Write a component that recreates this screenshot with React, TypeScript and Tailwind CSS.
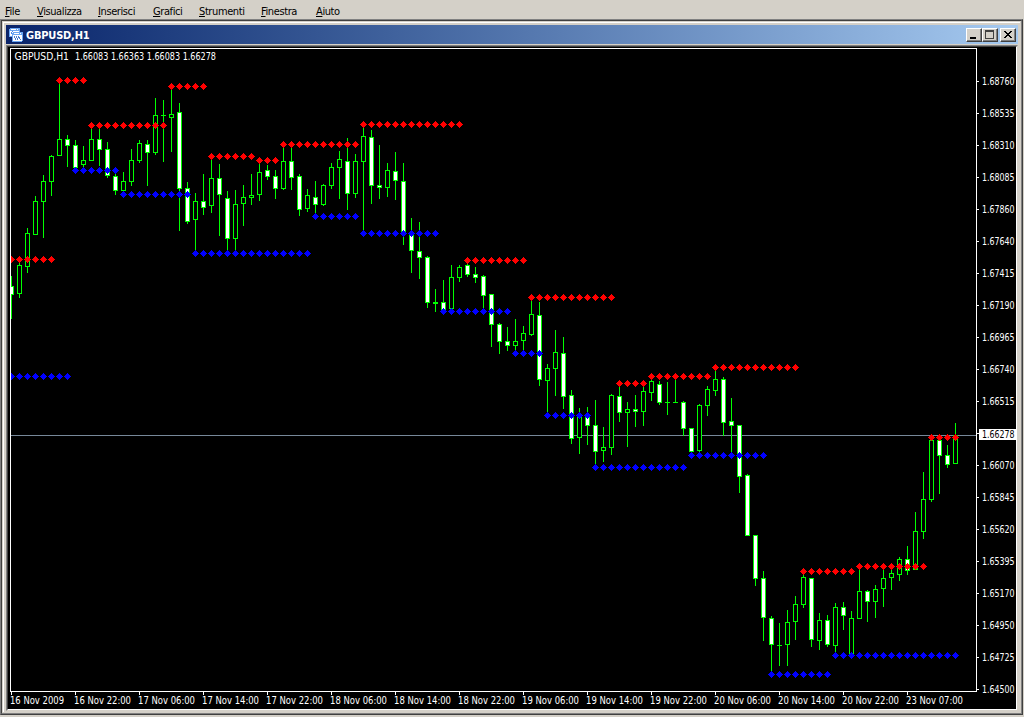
import React from "react";

type Candle = [high: number, low: number, top: number, bottom: number, filled: 0 | 1];

// One entry per hour; y values in chart pixels, bottoms exclusive.
const CANDLES: Candle[] = [
  [276, 319, 286, 295, 1], [261, 298, 265, 294, 0], [228, 273, 233, 267, 0], [196, 235, 201, 235, 0],
  [175, 238, 181, 202, 0], [155, 196, 156, 182, 0], [82, 156, 139, 156, 0], [135, 167, 139, 146, 1],
  [140, 168, 145, 168, 1], [146, 167, 160, 165, 0], [126, 161, 139, 161, 0], [126, 166, 139, 150, 1],
  [142, 178, 149, 176, 1], [174, 195, 176, 191, 1], [172, 194, 181, 191, 0], [149, 186, 160, 182, 0],
  [140, 163, 143, 161, 0], [140, 186, 144, 153, 1], [98, 155, 115, 153, 0], [100, 162, 115, 116, 0],
  [87, 152, 114, 118, 0], [103, 231, 112, 189, 1], [182, 224, 188, 222, 1], [193, 251, 201, 220, 0],
  [174, 215, 201, 208, 1], [158, 213, 178, 206, 0], [164, 236, 178, 195, 1], [191, 251, 198, 239, 1],
  [190, 251, 204, 239, 0], [185, 226, 197, 204, 0], [174, 205, 195, 198, 0], [163, 201, 172, 195, 0],
  [165, 180, 170, 177, 1], [170, 199, 176, 189, 1], [147, 190, 161, 189, 0], [147, 190, 161, 178, 1],
  [174, 216, 176, 210, 1], [189, 212, 195, 209, 0], [181, 214, 197, 205, 1], [184, 206, 185, 205, 0],
  [163, 189, 167, 186, 0], [151, 199, 159, 168, 0], [138, 210, 161, 194, 1], [154, 198, 161, 194, 0],
  [126, 232, 136, 162, 0], [130, 204, 137, 186, 1], [145, 199, 185, 188, 1], [163, 197, 170, 188, 0],
  [152, 200, 171, 181, 1], [163, 245, 181, 232, 1], [218, 273, 233, 251, 1], [222, 279, 251, 258, 1],
  [256, 308, 257, 303, 1], [289, 312, 302, 304, 0], [280, 312, 302, 311, 1], [265, 309, 277, 309, 0],
  [265, 282, 267, 278, 0], [263, 277, 265, 275, 1], [267, 283, 274, 278, 1], [275, 309, 276, 296, 1],
  [294, 347, 294, 325, 1], [323, 354, 324, 342, 1], [327, 351, 341, 346, 1], [319, 351, 341, 346, 0],
  [326, 351, 333, 341, 0], [299, 336, 314, 335, 0], [302, 386, 315, 380, 1], [364, 413, 368, 381, 0],
  [330, 396, 352, 369, 0], [337, 409, 353, 397, 1], [390, 444, 395, 439, 1], [408, 454, 416, 438, 0],
  [407, 445, 415, 426, 1], [400, 464, 425, 452, 1], [427, 462, 447, 451, 0], [394, 455, 395, 448, 0],
  [386, 422, 396, 413, 1], [402, 447, 409, 413, 0], [395, 427, 409, 412, 1], [386, 426, 391, 412, 0],
  [379, 401, 381, 393, 0], [381, 405, 384, 403, 1], [382, 415, 402, 403, 0], [379, 403, 402, 403, 0],
  [401, 436, 402, 429, 1], [428, 452, 428, 452, 1], [404, 452, 405, 451, 0], [386, 416, 389, 406, 0],
  [370, 396, 379, 391, 0], [377, 436, 379, 423, 1], [398, 453, 421, 426, 1], [425, 493, 425, 477, 1],
  [474, 536, 475, 536, 1], [535, 586, 535, 579, 1], [571, 641, 578, 618, 1], [616, 671, 618, 645, 1],
  [623, 666, 645, 646, 0], [610, 666, 622, 645, 0], [596, 640, 604, 622, 0], [574, 608, 577, 605, 0],
  [578, 647, 578, 640, 1], [613, 650, 620, 641, 0], [615, 647, 620, 645, 1], [603, 653, 607, 646, 0],
  [602, 630, 607, 616, 1], [611, 655, 618, 655, 0], [568, 619, 591, 619, 0], [590, 622, 591, 602, 1],
  [585, 618, 589, 602, 0], [568, 607, 578, 589, 0], [568, 590, 573, 578, 0], [557, 581, 559, 575, 0],
  [546, 575, 559, 571, 1], [512, 570, 531, 570, 0], [472, 539, 499, 532, 0], [438, 502, 440, 500, 0],
  [438, 494, 440, 456, 1], [445, 468, 455, 465, 1], [423, 464, 435, 464, 0],
];

type Level = [y: number, from: number, to: number];

const RESISTANCE: Level[] = [
  [259, 11, 51], [80, 59, 83], [125, 91, 163], [86, 171, 203], [156, 211, 251], [160, 259, 275],
  [144, 283, 355], [124, 363, 459], [260, 467, 523], [297, 531, 611], [383, 619, 643],
  [376, 651, 707], [367, 715, 795], [571, 803, 851], [566, 859, 923], [437, 931, 955],
];
const SUPPORT: Level[] = [
  [376, 11, 67], [170, 75, 115], [194, 123, 187], [253, 195, 307], [216, 315, 355], [233, 363, 435],
  [311, 443, 507], [353, 515, 539], [415, 547, 587], [467, 595, 683], [455, 691, 763],
  [674, 771, 827], [655, 835, 955],
];

const PRICES = [
  "1.68760", "1.68535", "1.68310", "1.68085", "1.67860", "1.67640", "1.67415", "1.67190", "1.66965",
  "1.66740", "1.66515", "", "1.66070", "1.65845", "1.65620", "1.65395", "1.65170", "1.64950",
  "1.64725", "1.64500",
];
const TIMES = [
  "16 Nov 2009", "16 Nov 22:00", "17 Nov 06:00", "17 Nov 14:00", "17 Nov 22:00", "18 Nov 06:00",
  "18 Nov 14:00", "18 Nov 22:00", "19 Nov 06:00", "19 Nov 14:00", "19 Nov 22:00", "20 Nov 06:00",
  "20 Nov 14:00", "20 Nov 22:00", "23 Nov 07:00",
];

const MENU: [string, string][] = [
  ["File", "w-[32px]"],
  ["Visualizza", "w-[61px]"],
  ["Inserisci", "w-[55px]"],
  ["Grafici", "w-[46px]"],
  ["Strumenti", "w-[62px]"],
  ["Finestra", "w-[55px]"],
  ["Aiuto", "w-[32px]"],
];

function diamond(x: number, y: number) {
  return (
    `M${x} ${y - 3}h1v7h-1z` +
    `M${x - 1} ${y - 2}h3v5h-3z` +
    `M${x - 2} ${y - 1}h5v3h-5z` +
    `M${x - 3} ${y}h7v1h-7z`
  );
}

function levelPath(levels: Level[]) {
  const parts: string[] = [];
  for (const [y, from, to] of levels) {
    for (let x = from; x <= to; x += 8) parts.push(diamond(x, y));
  }
  return parts.join("");
}

function Chart() {
  return (
    <svg
      width="1008"
      height="662"
      viewBox="8 47 1008 662"
      shapeRendering="crispEdges"
      className="block overflow-visible bg-black font-[family-name:'DejaVu_Sans_Condensed','DejaVu_Sans',sans-serif] text-[10px]"
    >
      <defs>
        <clipPath id="plot">
          <rect x="11" y="49" width="965" height="642" />
        </clipPath>
      </defs>
      <g clipPath="url(#plot)">
        <rect x="11" y="435" width="965" height="1" fill="#778899" />
        {CANDLES.map(([high, low, top, bottom, filled], i) => {
          const x = 11 + i * 8;
          return (
            <g key={i}>
              <rect x={x} y={high} width="1" height={low - high} fill="#00ff00" />
              <rect x={x - 2} y={top} width="5" height={bottom - top} fill="#00ff00" />
              {bottom - top > 2 && (
                <rect
                  x={x - 1}
                  y={top + 1}
                  width="3"
                  height={bottom - top - 2}
                  fill={filled ? "#ffffff" : "#000000"}
                />
              )}
            </g>
          );
        })}
        <path d={levelPath(RESISTANCE)} fill="#ff0000" />
        <path d={levelPath(SUPPORT)} fill="#0000ff" />
      </g>
      <path d="M10 48h967v644H10zM11 49v642h965V49z" fillRule="evenodd" fill="#ffffff" />
      <text x="14.5" y="60" fill="#ffffff" textLength="54.5" lengthAdjust="spacingAndGlyphs">GBPUSD,H1</text>
      <text x="75" y="60" fill="#ffffff" textLength="141" lengthAdjust="spacingAndGlyphs">
        1.66083 1.66363 1.66083 1.66278
      </text>
      {PRICES.map((price, i) => (
        <g key={i}>
          <rect x="977" y={81 + i * 32} width="2" height="1" fill="#ffffff" />
          {price && (
            <text x="982" y={85 + i * 32} fill="#ffffff" textLength="32.5" lengthAdjust="spacingAndGlyphs">
              {price}
            </text>
          )}
        </g>
      ))}
      <rect x="979" y="429" width="37" height="11" fill="#ffffff" />
      <text x="982" y="438" fill="#000000" textLength="32.5" lengthAdjust="spacingAndGlyphs">1.66278</text>
      {TIMES.map((time, i) => (
        <g key={time}>
          <rect x={11 + i * 64} y="692" width="1" height="3" fill="#ffffff" />
          <text
            x={10 + i * 64}
            y="704"
            fill="#ffffff"
            textLength={i === 0 ? 54 : 57}
            lengthAdjust="spacingAndGlyphs"
          >
            {time}
          </text>
        </g>
      ))}
    </svg>
  );
}

function ChartIcon() {
  return (
    <svg width="14" height="14" viewBox="0 0 14 14" shapeRendering="crispEdges" className="block">
      <path d="M1 0h10v9H0V1h1z" fill="#6ba6f2" />
      <rect x="1" y="3" width="9" height="5" fill="#ffffff" />
      <path d="M2 1h5v1h-5zM8 1h1v1h-1z" fill="#ffffff" />
      <path d="M2 4h1v2h-1zM3 3h1v1h-1zM5 4h1v1h-1z" fill="#4a8ae8" />
      <path d="M4 4h10v9h-1v1H3V5h1z" fill="#6ba6f2" />
      <rect x="4" y="7" width="9" height="6" fill="#ffffff" />
      <path d="M5 5h5v1h-5zM11 5h1v1h-1z" fill="#ffffff" />
      <path
        d="M5 8h1v2h-1zM6 10h1v2h-1zM7 8h1v2h-1zM8 10h1v2h-1zM9 8h1v2h-1zM10 9h1v2h-1zM11 11h1v1h-1z"
        fill="#4a80d0"
      />
    </svg>
  );
}

function CaptionButton({ children }: { children: React.ReactNode }) {
  return (
    <div className="h-[14px] w-4 border border-t-white border-r-[#404040] border-b-[#404040] border-l-white bg-[#d4d0c8]">
      <div className="h-3 w-[14px] border-r border-b border-[#808080]">
        <svg width="13" height="11" viewBox="0 0 13 11" shapeRendering="crispEdges" className="block">
          {children}
        </svg>
      </div>
    </div>
  );
}

export default function App() {
  return (
    <div className="flex h-[717px] w-[1024px] flex-col overflow-hidden bg-[#d4d0c8] font-[family-name:'DejaVu_Sans_Condensed','DejaVu_Sans',sans-serif]">
      <nav className="flex h-[19px] shrink-0 pt-[4px] pl-[5px] text-[11px] leading-[15px] tracking-[-0.4px] text-black">
        {MENU.map(([label, box]) => (
          <span key={label} className={`shrink-0 whitespace-nowrap ${box}`}>
            <span className="underline decoration-1 underline-offset-1">{label[0]}</span>
            {label.slice(1)}
          </span>
        ))}
      </nav>
      <div className="h-[696px] w-[1023px] border border-t-[#808080] border-r-[#404040] border-b-[#404040] border-l-[#808080]">
        <div className="h-[694px] w-[1021px] border border-t-[#404040] border-r-[#808080] border-b-[#808080] border-l-[#404040]">
          <div className="h-[692px] w-[1019px] border border-[#d4d0c8]">
            <div className="h-[690px] w-[1017px] border-t border-l border-white pt-[2px] pl-[2px]">
              <header className="flex h-[19px] w-[1012px] items-center bg-linear-to-r from-[#0a246a] to-[#a6caf0] pl-[3px]">
                <ChartIcon />
                <h1 className="ml-[3px] pt-px text-[11px] leading-[19px] font-bold tracking-[-0.2px] whitespace-nowrap text-white">
                  GBPUSD,H1
                </h1>
                <div className="ml-auto flex pr-[2px]">
                  <CaptionButton>
                    <rect x="3" y="8" width="6" height="2" fill="#000000" />
                  </CaptionButton>
                  <CaptionButton>
                    <path d="M2 1h9v9H2zM3 3v6h7V3z" fillRule="evenodd" fill="#404040" />
                  </CaptionButton>
                  <div className="ml-[2px]">
                    <CaptionButton>
                      <path
                        d="M3 2h2v1h-2zM9 2h2v1h-2zM4 3h2v1h-2zM8 3h2v1h-2zM5 4h4v1h-4zM6 5h2v1h-2zM5 6h4v1h-4zM4 7h2v1h-2zM8 7h2v1h-2zM3 8h2v1h-2zM9 8h2v1h-2z"
                        fill="#000000"
                      />
                    </CaptionButton>
                  </div>
                </div>
              </header>
              <main className="mt-px h-[666px] w-[1012px] border border-t-[#808080] border-r-[#d4d0c8] border-b-[#d4d0c8] border-l-[#808080]">
                <div className="h-[664px] w-[1010px] border border-t-[#404040] border-r-white border-b-white border-l-[#404040]">
                  <Chart />
                </div>
              </main>
            </div>
          </div>
        </div>
      </div>
    </div>
  );
}
